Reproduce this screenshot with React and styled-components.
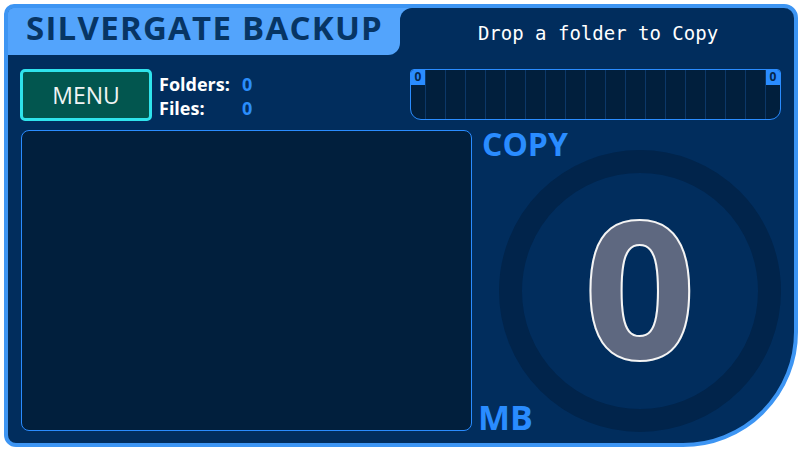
import React from "react";
import styled, { createGlobalStyle } from "styled-components";

const GlobalStyle = createGlobalStyle`
  html, body {
    margin: 0;
    padding: 0;
    background: #ffffff;
  }
  body {
    font-family: "Open Sans", "Noto Sans", sans-serif;
  }
`;

const Page = styled.div`
  width: 800px;
  height: 450px;
  padding: 4px 2px 3px 4px;
  box-sizing: border-box;
`;

const Frame = styled.div`
  height: 100%;
  box-sizing: border-box;
  border: 4px solid #3d95f3;
  border-radius: 10px 14px 115px 12px;
  background: #012d5d;
  display: flex;
  flex-direction: column;
  overflow: hidden;
`;

const HeaderRow = styled.div`
  display: flex;
  height: 47px;
  margin-top: -4px;
  padding-top: 4px;
  background: linear-gradient(to bottom, #53a4fc 0 50%, #012d5d 50% 100%);
`;

const TitleTab = styled.div`
  width: 392px;
  background: #53a4fc;
  border-bottom-right-radius: 12px;
  display: flex;
  align-items: center;
  padding: 0 0 9px 18px;
  box-sizing: border-box;
  h1 {
    margin: 0;
    font-size: 33px;
    font-weight: 700;
    color: #073564;
    letter-spacing: 1.25px;
  }
`;

const DropZone = styled.div`
  flex: 1;
  background: #012d5d;
  border-top-left-radius: 12px;
  display: flex;
  align-items: center;
  justify-content: center;
  padding: 2px 0 0 2px;
  font-family: "DejaVu Sans Mono", "Liberation Mono", monospace;
  font-size: 19px;
  color: #ffffff;
`;

const Body = styled.div`
  flex: 1;
  display: flex;
  flex-direction: column;
  padding: 14px 13px 12px 12px;
  gap: 9px;
`;

const TopRow = styled.div`
  display: flex;
  align-items: flex-start;
  height: 52px;
`;

const MenuButton = styled.button`
  width: 132px;
  height: 52px;
  box-sizing: border-box;
  background: #02564f;
  border: 3px solid #2fe3ec;
  border-radius: 5px;
  color: #f0f4f4;
  font-family: "Open Sans", "Noto Sans", sans-serif;
  font-size: 23px;
  font-weight: 400;
  padding: 0;
`;

const Counts = styled.div`
  margin-left: 7px;
  margin-top: 3px;
  display: grid;
  grid-template-columns: 83px auto;
  font-size: 18px;
  font-weight: 700;
  line-height: 24px;
`;

const Label = styled.span`
  color: #ffffff;
`;

const Value = styled.span`
  color: #2b8dfb;
`;

const Bar = styled.div`
  position: relative;
  margin-left: auto;
  width: 371px;
  height: 51px;
  box-sizing: border-box;
  border: 1px solid #2a8cff;
  border-radius: 4px 4px 11px 11px;
  background: #011f3d;
  overflow: hidden;
`;

const BarGrid = styled.div`
  margin: 0 14px;
  height: 100%;
  background-image: repeating-linear-gradient(
    to right,
    #0c3869 0 1px,
    transparent 1px 20px
  );
`;

const Badge = styled.span`
  position: absolute;
  top: 0;
  ${(p) => (p.$right ? "right: 0;" : "left: 0;")}
  width: 14px;
  height: 15px;
  background: #2a8cff;
  color: #04264c;
  font-size: 12px;
  font-weight: 700;
  line-height: 14px;
  text-align: center;
`;

const MainRow = styled.div`
  flex: 1;
  display: flex;
`;

const ListBox = styled.div`
  width: 451px;
  box-sizing: border-box;
  border: 1px solid #2a8cff;
  border-radius: 8px;
  background: #011f3d;
  margin-left: 1px;
`;

const Gauge = styled.div`
  flex: 1;
  display: grid;
  grid-template: 1fr / 1fr;
  margin-left: 7px;
`;

const GaugeLabel = styled.div`
  grid-area: 1 / 1;
  color: #2a8cff;
  font-weight: 700;
  line-height: 1;
  align-self: ${(p) => (p.$bottom ? "end" : "start")};
  font-size: ${(p) => p.$size}px;
  margin-left: ${(p) => p.$indent}px;
  margin-top: ${(p) => (p.$bottom ? 0 : -2)}px;
  margin-bottom: ${(p) => (p.$bottom ? -3 : 0)}px;
`;

const Ring = styled.div`
  grid-area: 1 / 1;
  justify-self: end;
  align-self: end;
  margin-bottom: -1px;
  width: 282px;
  height: 282px;
  box-sizing: border-box;
  border-radius: 50%;
  border: 23px solid #01244b;
  background: #012d5d;
  display: flex;
  align-items: center;
  justify-content: center;
`;

const BigDigit = styled.span`
  font-size: 188px;
  font-weight: 700;
  line-height: 1;
  color: #5e6880;
  -webkit-text-stroke: 4px #f4f4f4;
  paint-order: stroke fill;
  display: inline-block;
  transform: scaleX(1.03);
  margin-top: -12px;
`;

export default function App() {
  return (
    <Page>
      <GlobalStyle />
      <Frame>
        <HeaderRow>
          <TitleTab>
            <h1>SILVERGATE BACKUP</h1>
          </TitleTab>
          <DropZone>Drop a folder to Copy</DropZone>
        </HeaderRow>
        <Body>
          <TopRow>
            <MenuButton>MENU</MenuButton>
            <Counts>
              <Label>Folders:</Label>
              <Value>0</Value>
              <Label>Files:</Label>
              <Value>0</Value>
            </Counts>
            <Bar>
              <BarGrid />
              <Badge>0</Badge>
              <Badge $right>0</Badge>
            </Bar>
          </TopRow>
          <MainRow>
            <ListBox />
            <Gauge>
              <Ring>
                <BigDigit>0</BigDigit>
              </Ring>
              <GaugeLabel $size={32} $indent={3}>COPY</GaugeLabel>
              <GaugeLabel $size={34} $indent={-1} $bottom>MB</GaugeLabel>
            </Gauge>
          </MainRow>
        </Body>
      </Frame>
    </Page>
  );
}
